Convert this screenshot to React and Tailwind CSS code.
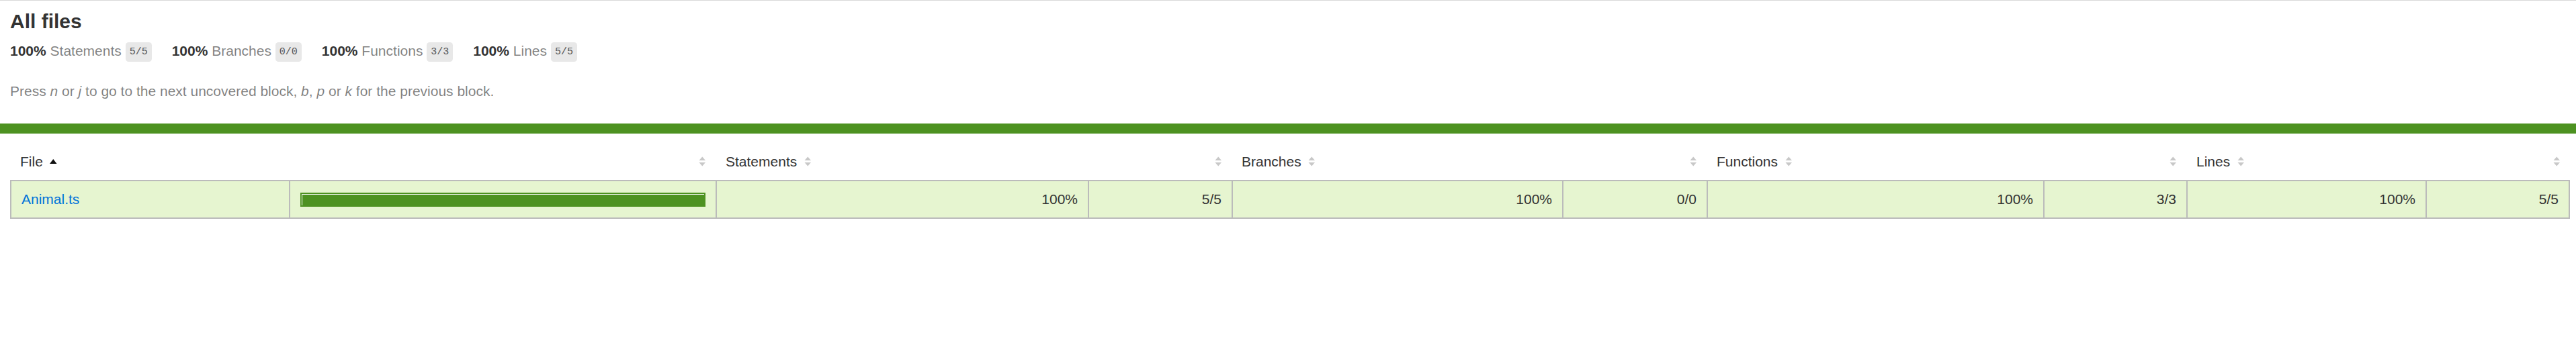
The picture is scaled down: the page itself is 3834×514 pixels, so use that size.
const cols = [
  'w-[415px]',
  'w-[635px]',
  'w-[554px]',
  'w-[214px]',
  'w-[492px]',
  'w-[215px]',
  'w-[501px]',
  'w-[213px]',
  'w-[356px]',
  'w-[215px]',
];

const summary = [
  { label: 'Statements', pct: '100%', frac: '5/5' },
  { label: 'Branches', pct: '100%', frac: '0/0' },
  { label: 'Functions', pct: '100%', frac: '3/3' },
  { label: 'Lines', pct: '100%', frac: '5/5' },
];

const Sorter = ({ active }) => (
  <span className="ml-[10.5px] inline-block h-[15px] w-[10.5px] align-baseline">
    {active ? (
      <svg viewBox="0 0 10.5 15" className="h-[15px] w-[10.5px]">
        <polygon points="5.25,4 10.5,11 0,11" fill="#111" />
      </svg>
    ) : (
      <svg viewBox="0 0 10.5 15" className="h-[15px] w-[10.5px]">
        <polygon points="5.25,0.5 10,6 0.5,6" fill="#c8c8c8" />
        <polygon points="0.5,9 10,9 5.25,14.5" fill="#c8c8c8" />
      </svg>
    )}
  </span>
);

const App = () => {
  const th = 'p-[15px] font-normal whitespace-nowrap';
  const td = 'p-[15px] border-y-2 border-l-2 border-[#bbb] align-middle';

  return (
    <div className="w-full overflow-hidden bg-white">
      <div className="w-[3840px] font-['Liberation_Sans',Arial,sans-serif] text-[21px] leading-[normal] text-[#333]">
        {/* header block */}
        <div className="border-t border-[#d8d8d8] px-[15px] pt-[14px] pb-[15px]">
          <h1 className="m-0 text-[30px] font-bold">All files</h1>
          <div className="flex">
            {summary.map((s) => (
              <div key={s.label} className="py-[15px] pr-[30px]">
                <span className="font-bold">{s.pct} </span>
                <span className="text-black/50">{s.label}</span>{' '}
                <span className="rounded-[4.5px] bg-[#e8e8e8] px-[6px] py-[6px] align-middle font-['Liberation_Mono',monospace] text-[15px] text-[#555]">
                  {s.frac}
                </span>
              </div>
            ))}
          </div>
          <p className="my-[21px] text-black/50">
            Press <em>n</em> or <em>j</em> to go to the next uncovered block, <em>b</em>,{' '}
            <em>p</em> or <em>k</em> for the previous block.
          </p>
        </div>

        {/* status line */}
        <div className="h-[15px] bg-[#4d9221]"></div>

        {/* coverage table */}
        <div className="p-[15px]">
          <table className="w-full table-fixed border-separate border-spacing-0">
            <colgroup>
              {cols.map((c, i) => (
                <col key={i} className={c} />
              ))}
            </colgroup>
            <thead>
              <tr>
                <th className={`${th} text-left`}>
                  File
                  <Sorter active />
                </th>
                <th className={`${th} text-right`}>
                  <Sorter />
                </th>
                <th className={`${th} text-left`}>
                  Statements
                  <Sorter />
                </th>
                <th className={`${th} text-right`}>
                  <Sorter />
                </th>
                <th className={`${th} text-left`}>
                  Branches
                  <Sorter />
                </th>
                <th className={`${th} text-right`}>
                  <Sorter />
                </th>
                <th className={`${th} text-left`}>
                  Functions
                  <Sorter />
                </th>
                <th className={`${th} text-right`}>
                  <Sorter />
                </th>
                <th className={`${th} text-left`}>
                  Lines
                  <Sorter />
                </th>
                <th className={`${th} text-right`}>
                  <Sorter />
                </th>
              </tr>
            </thead>
            <tbody>
              <tr className="bg-[#e6f5d0]">
                <td className={`${td} whitespace-nowrap text-left`}>
                  <a href="#" className="text-[#0074d9]">
                    Animal.ts
                  </a>
                </td>
                <td className={td}>
                  <div className="border-2 border-[#4d9221] bg-white pt-px pl-px">
                    <div className="h-[16px] w-full bg-[#4d9221]"></div>
                  </div>
                </td>
                <td className={`${td} text-right`}>100%</td>
                <td className={`${td} text-right`}>5/5</td>
                <td className={`${td} text-right`}>100%</td>
                <td className={`${td} text-right`}>0/0</td>
                <td className={`${td} text-right`}>100%</td>
                <td className={`${td} text-right`}>3/3</td>
                <td className={`${td} text-right`}>100%</td>
                <td className={`${td} border-r-2 text-right`}>5/5</td>
              </tr>
            </tbody>
          </table>
        </div>
      </div>
    </div>
  );
};

export default App;
